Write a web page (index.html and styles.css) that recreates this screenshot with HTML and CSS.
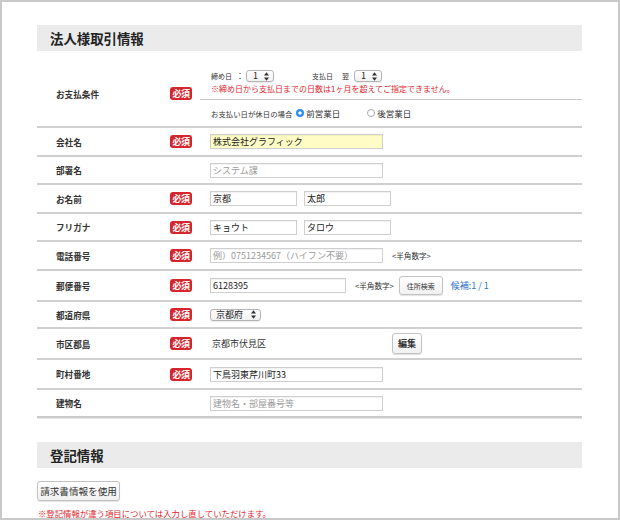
FILE: index.html
```html
<!DOCTYPE html>
<html lang="ja">
<head>
<meta charset="utf-8">
<title>法人様取引情報</title>
<link rel="stylesheet" href="styles.css">
</head>
<body>
<div class="frame">
  <h2 class="band">法人様取引情報</h2>
  <div class="table">
    <div class="row row-pay">
      <div class="lbl">お支払条件</div>
      <div class="req"><span class="badge">必須</span></div>
      <div class="pay">
        <div class="pay-a">
          <div class="pay-line">
            <span class="sub">締め日</span>
            <span class="sub colon">：</span>
            <span class="sel sel-s">1<svg class="arr" width="5" height="9" viewBox="0 0 5 9"><path d="M0 3.6 L2.5 0.2 L5 3.6Z M0 5.4 L2.5 8.8 L5 5.4Z"/></svg></span>
            <span class="sub pay-day">支払日</span>
            <span class="sub next">翌</span>
            <span class="sel sel-s sel-next">1<svg class="arr" width="5" height="9" viewBox="0 0 5 9"><path d="M0 3.6 L2.5 0.2 L5 3.6Z M0 5.4 L2.5 8.8 L5 5.4Z"/></svg></span>
          </div>
          <div class="note">※締め日から支払日までの日数は1ヶ月を超えてご指定できません。</div>
        </div>
        <div class="pay-b">
          <span class="sub2">お支払い日が休日の場合</span>
          <span class="radio on"></span><span class="rlbl">前営業日</span>
          <span class="radio off"></span><span class="rlbl">後営業日</span>
        </div>
      </div>
    </div>

    <div class="row">
      <div class="lbl">会社名</div>
      <div class="req"><span class="badge">必須</span></div>
      <div class="val"><span class="inp inp-l filled">株式会社グラフィック</span></div>
    </div>

    <div class="row r28">
      <div class="lbl">部署名</div>
      <div class="req"></div>
      <div class="val"><span class="inp inp-l ph">システム課</span></div>
    </div>

    <div class="row">
      <div class="lbl">お名前</div>
      <div class="req"><span class="badge">必須</span></div>
      <div class="val"><span class="inp inp-s">京都</span><span class="inp inp-s second">太郎</span></div>
    </div>

    <div class="row r28">
      <div class="lbl">フリガナ</div>
      <div class="req"><span class="badge">必須</span></div>
      <div class="val"><span class="inp inp-s">キョウト</span><span class="inp inp-s second">タロウ</span></div>
    </div>

    <div class="row">
      <div class="lbl">電話番号</div>
      <div class="req"><span class="badge">必須</span></div>
      <div class="val"><span class="inp inp-l ph">例）0751234567（ハイフン不要）</span><span class="hint">&lt;半角数字&gt;</span></div>
    </div>

    <div class="row r31">
      <div class="lbl">郵便番号</div>
      <div class="req"><span class="badge">必須</span></div>
      <div class="val"><span class="inp inp-m">6128395</span><span class="hint">&lt;半角数字&gt;</span><span class="btn btn-search">住所検索</span><span class="cand">候補:1 / 1</span></div>
    </div>

    <div class="row r27">
      <div class="lbl">都道府県</div>
      <div class="req"><span class="badge">必須</span></div>
      <div class="val"><span class="sel sel-pref">京都府<svg class="arr" width="5" height="9" viewBox="0 0 5 9"><path d="M0 3.6 L2.5 0.2 L5 3.6Z M0 5.4 L2.5 8.8 L5 5.4Z"/></svg></span></div>
    </div>

    <div class="row r31">
      <div class="lbl">市区郡島</div>
      <div class="req"><span class="badge">必須</span></div>
      <div class="val"><span class="city">京都市伏見区</span><span class="btn btn-edit">編集</span></div>
    </div>

    <div class="row r30">
      <div class="lbl">町村番地</div>
      <div class="req"><span class="badge">必須</span></div>
      <div class="val"><span class="inp inp-l">下鳥羽東芹川町33</span></div>
    </div>

    <div class="row r28 last">
      <div class="lbl">建物名</div>
      <div class="req"></div>
      <div class="val"><span class="inp inp-l ph">建物名・部屋番号等</span></div>
    </div>
  </div>

  <h2 class="band band2">登記情報</h2>
  <span class="btn btn-use">請求書情報を使用</span>
  <p class="note2">※登記情報が違う項目については入力し直していただけます。</p>
</div>
</body>
</html>
```

FILE: styles.css
```css
* { box-sizing: border-box; }
html, body { margin: 0; padding: 0; }
body {
  font-family: "Noto Sans CJK JP", "Noto Sans", sans-serif;
  color: #333;
  background: #fff;
}
.frame {
  width: 620px;
  height: 520px;
  border: 2px solid #c9c9c9;
  padding: 23px 36px 0 35px;
  overflow: hidden;
}
.band {
  margin: 0;
  height: 26px;
  background: #ebebeb;
  font-size: 13.4px;
  font-weight: bold;
  color: #222;
  line-height: 26px;
  padding-left: 13px;
}
.table { margin-top: 10px; }
.row {
  display: grid;
  grid-template-columns: 133px 30px 1fr;
  align-items: center;
  height: 29px;
  border-bottom: 2px solid #d0d0d0;
}
.row.r27 { height: 27px; }
.row.r28 { height: 28px; }
.row.r30 { height: 30px; }
.row.r31 { height: 31px; }
.row.last { border-bottom: 2px solid #cbcbcb; box-shadow: 0 1px 0 #e6e6e6; }
.row-pay { height: 67px; }
.lbl {
  padding-left: 19px;
  font-size: 8.6px;
  font-weight: bold;
  color: #333;
}
.req { display: flex; align-items: center; }
.badge {
  display: inline-block;
  width: 22px;
  height: 13px;
  background: #d5262d;
  color: #fff;
  border-radius: 3px;
  font-size: 9px;
  font-weight: bold;
  line-height: 13px;
  text-align: center;
  letter-spacing: -0.5px;
}
.pay { align-self: stretch; display: flex; flex-direction: column; }
.pay-a {
  height: 39px;
  padding: 9px 0 0 11px;
  border-bottom: 1px solid #c8c8c8;
}
.pay-line { display: flex; align-items: center; height: 12px; }
.sub { font-size: 7px; color: #333; line-height: 12px; }
.colon { margin-left: 4px; font-size: 8px; }
.sel {
  display: inline-flex;
  align-items: center;
  justify-content: space-between;
  height: 12px;
  border: 1px solid #b4b4b4;
  border-radius: 3px;
  background: linear-gradient(#fff, #f1f1f1);
  box-shadow: 0 1px 1px rgba(0,0,0,0.08);
  font-size: 9px;
  line-height: 10px;
  color: #222;
}
.arr { fill: #333; flex: none; }
.sel-s { width: 28px; margin-left: 2px; padding: 0 4px 0 6px; }
.pay-day { margin-left: 38px; }
.next { margin-left: 9px; }
.sel-next { margin-left: 5px; }
.note {
  margin-top: 1px;
  font-size: 8px;
  line-height: 11px;
  color: #e2262d;
}
.pay-b {
  flex: 1;
  display: flex;
  align-items: center;
  padding-left: 11px;
}
.sub2 { font-size: 7.4px; color: #333; }
.radio {
  width: 8px;
  height: 8px;
  border-radius: 50%;
  margin-left: 4px;
  flex: none;
}
.radio.on {
  background: radial-gradient(circle, #fff 0 1.4px, #2f8ff0 1.8px);
}
.radio.off {
  margin-left: 27px;
  border: 1px solid #a8a8a8;
  background: #fff;
}
.rlbl { font-size: 8.5px; margin-left: 2px; color: #333; }
.val { display: flex; align-items: center; padding-left: 10px; }
.inp {
  display: inline-block;
  height: 15px;
  border: 1px solid #cfcfcf;
  box-shadow: inset 0 1px 1px rgba(0,0,0,0.06);
  font-size: 9px;
  line-height: 13px;
  padding-left: 2px;
  color: #222;
  background: #fff;
  white-space: nowrap;
  overflow: hidden;
}
.inp.filled { background: #fffdc5; }
.inp.ph { color: #9a9a9a; }
.inp-l { width: 173px; }
.inp-m { width: 136px; }
.inp-s { width: 87px; }
.inp.second { margin-left: 7px; }
.hint { font-size: 7.6px; margin-left: 9px; color: #333; }
.btn {
  display: inline-flex;
  align-items: center;
  justify-content: center;
  border: 1px solid #c2c2c2;
  border-radius: 3px;
  background: linear-gradient(#fff, #f1f1f1);
  box-shadow: 0 1px 1px rgba(0,0,0,0.12);
  color: #333;
}
.btn-search { width: 44px; height: 19px; margin-left: 5px; font-size: 7px; }
.cand { margin-left: 8px; font-size: 9px; color: #2a72c8; }
.sel-pref { width: 51px; padding: 0 4px 0 5px; font-size: 9px; }
.city { width: 182px; padding-left: 2px; font-size: 9px; color: #333; }
.btn-edit { width: 30px; height: 21px; font-size: 9px; font-weight: bold; }
.band2 { margin-top: 24px; }
.btn-use {
  width: 83px;
  height: 20px;
  margin-top: 13px;
  font-size: 9.6px;
}
.note2 {
  margin: 7px 0 0 1px;
  font-size: 8.4px;
  line-height: 11px;
  color: #e2262d;
}
```
